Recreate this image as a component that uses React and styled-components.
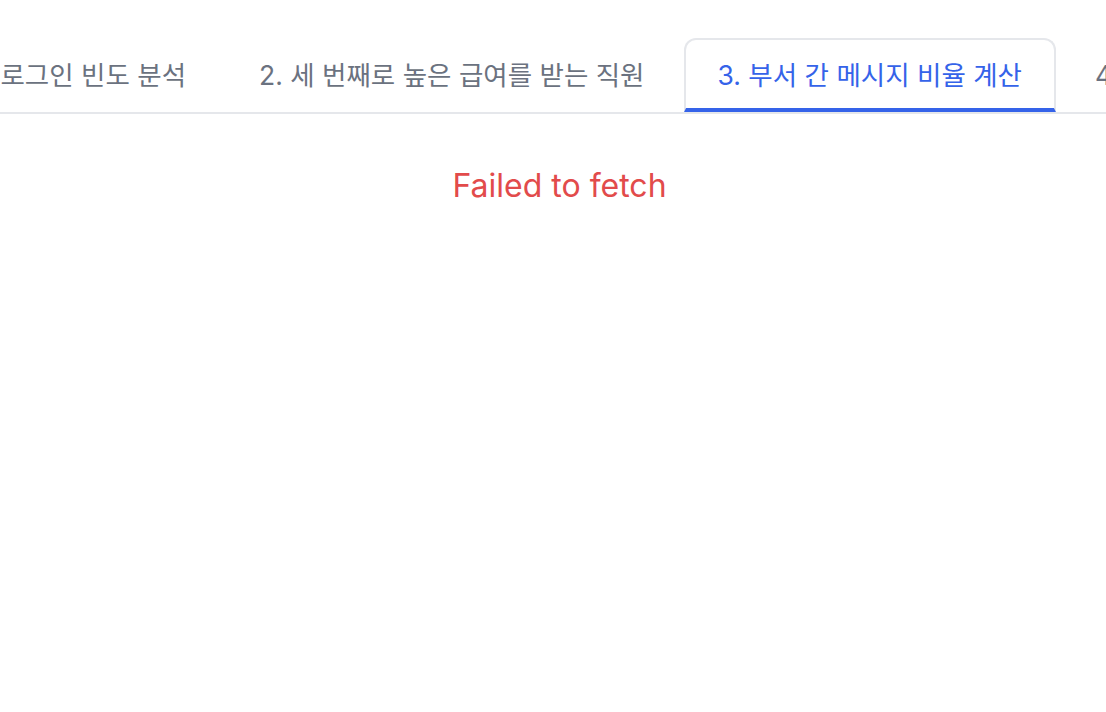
import React, { useLayoutEffect, useRef, useState } from "react";
import styled, { createGlobalStyle } from "styled-components";

const GlobalStyle = createGlobalStyle`
  html, body {
    margin: 0;
    padding: 0;
    background: #ffffff;
  }
  body {
    font-family: "Inter", "Noto Sans CJK KR", sans-serif;
  }
`;

const Page = styled.div`
  width: 100%;
  min-height: 712px;
  padding-top: 38px;
  box-sizing: border-box;
  background: #ffffff;
`;

const TabStrip = styled.nav`
  display: flex;
  gap: 5px;
  overflow-x: hidden;
  border-bottom: 2px solid #e5e7eb;
`;

const Tab = styled.button`
  flex: 0 0 auto;
  box-sizing: border-box;
  height: 74px;
  padding: 3px 32px 0;
  margin: 0;
  background: #ffffff;
  border: 2px solid ${(p) => (p.$active ? "#e5e7eb" : "transparent")};
  border-bottom: 4px solid ${(p) => (p.$active ? "#3563e9" : "transparent")};
  border-radius: 12px 12px 0 0;
  font-family: "Inter", "Noto Sans CJK KR", sans-serif;
  font-size: 26.5px;
  font-weight: 400;
  line-height: 1;
  white-space: nowrap;
  color: ${(p) => (p.$active ? "#3563e9" : "#6b7280")};
  cursor: pointer;
`;

const Content = styled.main`
  padding: 48px 0 0 13px;
  text-align: center;
`;

const ErrorText = styled.p`
  margin: 0;
  font-family: "Inter", "Noto Sans CJK KR", sans-serif;
  font-size: 32px;
  line-height: 48px;
  color: #e24b4b;
`;

const tabs = [
  "1. 사용자 로그인 빈도 분석",
  "2. 세 번째로 높은 급여를 받는 직원",
  "3. 부서 간 메시지 비율 계산",
  "4. 부서별 평균 연봉 비교",
];

export default function App() {
  const [active, setActive] = useState(2);
  const stripRef = useRef(null);
  const secondRef = useRef(null);

  useLayoutEffect(() => {
    const strip = stripRef.current;
    const second = secondRef.current;
    if (strip && second) {
      strip.scrollLeft = second.offsetLeft - strip.offsetLeft - 225;
    }
  }, []);

  return (
    <>
      <GlobalStyle />
      <Page>
        <TabStrip ref={stripRef}>
          {tabs.map((t, i) => (
            <Tab
              key={t}
              ref={i === 1 ? secondRef : undefined}
              $active={i === active}
              onClick={() => setActive(i)}
            >
              {t}
            </Tab>
          ))}
        </TabStrip>
        <Content>
          <ErrorText>Failed to fetch</ErrorText>
        </Content>
      </Page>
    </>
  );
}
